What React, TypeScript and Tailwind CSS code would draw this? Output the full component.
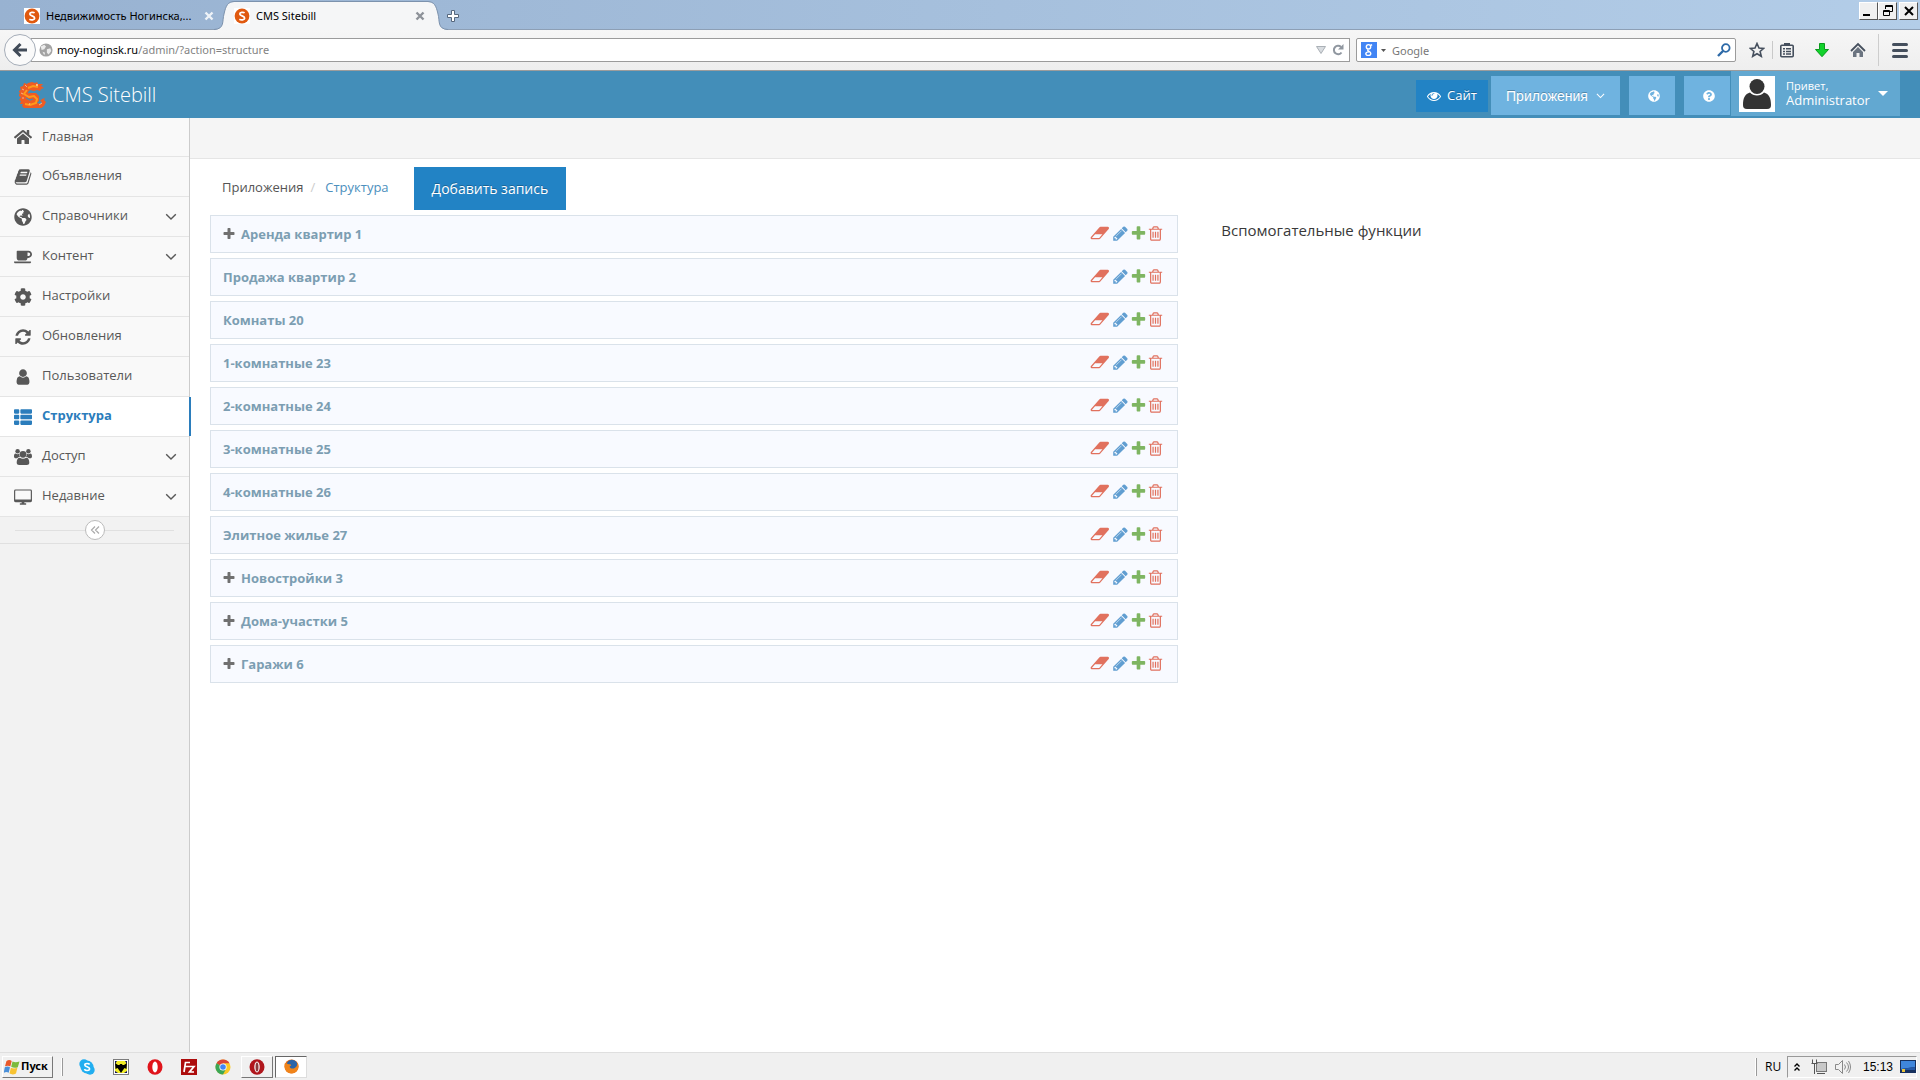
import React from "react";
import {
  FaHome,
  FaCoffee,
  FaCog,
  FaThList,
  FaGlobeAmericas,
  FaQuestionCircle,
} from "react-icons/fa";

type IconProps = { className?: string };

const glyphs = {
  user: "M1536 1399q0 109-62.5 187t-150.5 78h-854q-88 0-150.5-78t-62.5-187q0-85 8.5-160.5t31.5-152 58.5-131 94-89 134.5-34.5q131 128 313 128t313-128q76 0 134.5 34.5t94 89 58.5 131 31.5 152 8.5 160.5zm-256-887q0 159-112.5 271.5t-271.5 112.5-271.5-112.5-112.5-271.5 112.5-271.5 271.5-112.5 271.5 112.5 112.5 271.5z",
  book: "M1703 478q40 57 18 129l-275 906q-19 64-76.5 107.5t-122.5 43.5h-923q-77 0-148.5-53.5t-99.5-131.5q-24-67-2-127 0-4 3-27t4-37q1-8-3-21.5t-3-19.5q2-11 8-21t16.5-23.5 16.5-23.5q23-38 45-91.5t30-91.5q3-10 .5-30t-.5-28q3-11 17-28t17-23q21-36 42-92t25-90q1-9-2.5-32t.5-28q4-13 22-30.5t22-22.5q19-26 42.5-84.5t27.5-96.5q1-8-3-25.5t-2-26.5q2-8 9-18t18-23 17-21q8-12 16.5-30.5t15-35 16-36 19.5-32 26.5-23.5 36-11.5 47.5 5.5l-1 3q38-9 51-9h761q74 0 114 56t18 130l-274 906q-36 119-71.5 153.5t-128.5 34.5h-869q-27 0-38 15-11 16-1 43 24 70 144 70h923q29 0 56-15.5t35-41.5l300-987q7-22 5-57 38 15 59 43zm-1064 2q-4 13 2 22.5t20 9.5h608q13 0 25.5-9.5t16.5-22.5l21-64q4-13-2-22.5t-20-9.5h-608q-13 0-25.5 9.5t-16.5 22.5zm-83 256q-4 13 2 22.5t20 9.5h608q13 0 25.5-9.5t16.5-22.5l21-64q4-13-2-22.5t-20-9.5h-608q-13 0-25.5 9.5t-16.5 22.5z",
  plus: "M1600 736v192q0 40-28 68t-68 28h-416v416q0 40-28 68t-68 28h-192q-40 0-68-28t-28-68v-416h-416q-40 0-68-28t-28-68v-192q0-40 28-68t68-28h416v-416q0-40 28-68t68-28h192q40 0 68 28t28 68v416h416q40 0 68 28t28 68z",
  eraser: "M960 1408l336-384h-768l-336 384h768zm1013-1077q15 34 9.5 71.5t-30.5 65.5l-896 1024q-38 44-96 44h-768q-38 0-69.500-20.500t-47.500-54.500q-15-34-9.500-71.500t30.500-65.500l896-1024q38-44 96-44h768q38 0 69.500 20.500t47.500 54.500z",
  trash: "M704 736v576q0 14-9 23t-23 9h-64q-14 0-23-9t-9-23v-576q0-14 9-23t23-9h64q14 0 23 9t9 23zm256 0v576q0 14-9 23t-23 9h-64q-14 0-23-9t-9-23v-576q0-14 9-23t23-9h64q14 0 23 9t9 23zm256 0v576q0 14-9 23t-23 9h-64q-14 0-23-9t-9-23v-576q0-14 9-23t23-9h64q14 0 23 9t9 23zm128 724v-948h-896v948q0 22 7 40.500t14.500 27 10.500 8.500h832q3 0 10.500-8.500t14.500-27 7-40.500zm-672-1076h448l-48-117q-7-9-17-11h-317q-10 2-17 11zm928 32v64q0 14-9 23t-23 9h-96v948q0 83-47 143.500t-113 60.500h-832q-66 0-113-58.500t-47-141.500v-952h-96q-14 0-23-9t-9-23v-64q0-14 9-23t23-9h309l70-167q15-37 54-63t79-26h320q40 0 79 26t54 63l70 167h309q14 0 23 9t9 23z",
  pencil: "M491 1536l91-91-235-235-91 91v107h128v128h107zm523-928q0-22-22-22-10 0-17 7l-542 542q-7 7-7 17 0 22 22 22 10 0 17-7l542-542q7-7 7-17zm-54-192l416 416-832 832h-416v-416zm683 96q0 53-37 90l-166 166-416-416 166-165q36-38 90-38 53 0 91 38l235 234q37 39 37 91z",
  eye: "M1664 960q-152-236-381-353 61 104 61 225 0 185-131.500 316.500t-316.500 131.500-316.500-131.500-131.500-316.500q0-121 61-225-229 117-381 353 133 205 333.500 326.500t434.500 121.500 434.500-121.500 333.500-326.500zm-720-384q0-20-14-34t-34-14q-125 0-214.500 89.500t-89.500 214.500q0 20 14 34t34 14 34-14 14-34q0-86 61-147t147-61q20 0 34-14t14-34zm848 384q0 34-20 69-140 230-376.500 368.500t-499.500 138.500-499.500-139-376.500-368q-20-35-20-69t20-69q140-229 376.500-368t499.500-139 499.500 139 376.500 368q20 35 20 69z",
  refresh: "M1639 1056q0 5-1 7-64 268-268 434.500t-478 166.500q-146 0-282.500-55t-243.500-157l-129 129q-19 19-45 19t-45-19-19-45v-448q0-26 19-45t45-19h448q26 0 45 19t19 45-19 45l-137 137q71 66 161 102t187 36q134 0 250-65t186-179q11-17 53-117 8-23 30-23h192q13 0 22.500 9.500t9.500 22.500zm25-800v448q0 26-19 45t-45 19h-448q-26 0-45-19t-19-45 19-45l138-138q-148-137-349-137-134 0-250 65t-186 179q-11 17-53 117-8 23-30 23h-199q-13 0-22.500-9.500t-9.500-22.500v-7q65-268 270-434.500t480-166.500q146 0 284 55.500t245 156.500l130-129q19-19 45-19t45 19 19 45z",
};

function Glyph({ name, className, box = "0 0 1792 1792" }: { name: keyof typeof glyphs; className?: string; box?: string }) {
  return (
    <svg viewBox={box} className={className} fill="currentColor" aria-hidden="true">
      <path d={glyphs[name]} />
    </svg>
  );
}

const Book = (p: IconProps) => <Glyph name="book" {...p} />;
const User = (p: IconProps) => <Glyph name="user" {...p} />;
const Refresh = (p: IconProps) => <Glyph name="refresh" {...p} />;

function Users({ className }: IconProps) {
  return (
    <svg viewBox="0 0 20 18" className={className} fill="currentColor" aria-hidden="true">
      <circle cx="4" cy="2.700" r="2.500" />
      <circle cx="16" cy="2.700" r="2.500" />
      <circle cx="10" cy="6" r="3.800" />
      <path d="M0 8.500C0 6.500.6 5.200 1.800 5.200c1 .8 3 .9 4 .3 0 1.600.2 2.500.9 3.500-1.300 0-2.500.6-3.200 1.500H2C.8 10.500 0 9.800 0 8.500zM20 8.500c0-2-.6-3.300-1.800-3.300-1 .8-3 .9-4 .3 0 1.600-.2 2.500-.9 3.500 1.300 0 2.500.6 3.200 1.500H18c1.200 0 2-.7 2-2z" />
      <path d="M3 15.500c0-3.500 1-5.800 3.500-5.800 2 1.700 5 1.700 7 0 2.500 0 3.500 2.300 3.500 5.800 0 1.600-1.200 2.500-2.700 2.500H5.700C4.200 18 3 17.100 3 15.500z" />
    </svg>
  );
}

function Desktop({ className }: IconProps) {
  return (
    <svg viewBox="0 0 20 18" className={className} aria-hidden="true">
      <rect x=".7" y="1.200" width="18.600" height="13" rx="1" fill="none" stroke="currentColor" strokeWidth="1.300" />
      <path d="M1 11.800h18v2.400H1zM8.500 14h3v2h2v1.500h-7V16h2z" fill="currentColor" />
    </svg>
  );
}

function AngleDown({ className }: IconProps) {
  return (
    <svg viewBox="0 0 12 8" className={className} fill="none" stroke="currentColor" aria-hidden="true">
      <path d="M1.200 1.200L6 6l4.800-4.800" strokeWidth="1.400" />
    </svg>
  );
}

function AngleDoubleLeft({ className }: IconProps) {
  return (
    <svg viewBox="0 0 10 10" className={className} fill="none" stroke="currentColor" aria-hidden="true">
      <path d="M5 1.500L1.500 5 5 8.500M9 1.500L5.500 5 9 8.500" strokeWidth="1.200" />
    </svg>
  );
}

function SiteFavicon() {
  return (
    <svg viewBox="0 0 16 16" className="size-4 shrink-0" aria-hidden="true">
      <rect width="16" height="16" fill="#fff" />
      <circle cx="8" cy="8" r="7.400" fill="#e0590f" />
      <path d="M10.600 4.900C9.500 4 5.800 3.900 5.800 6.100c0 2.100 4.800 1.500 4.800 3.900 0 2.200-3.800 2.200-5.200 1.200" fill="none" stroke="#fff" strokeWidth="1.700" />
    </svg>
  );
}

function CloseMark({ className }: IconProps) {
  return (
    <svg viewBox="0 0 10 10" className={className} aria-hidden="true">
      <path d="M1.500 1.500l7 7M8.500 1.500l-7 7" stroke="currentColor" strokeWidth="2.400" />
    </svg>
  );
}

function GlobeMark() {
  return (
    <svg viewBox="0 0 16 16" className="size-[14px] shrink-0" aria-hidden="true">
      <circle cx="8" cy="8" r="7.500" fill="#a3a3a3" />
      <path d="M2 4l4-2 2 2-2 3-3 1zM9 7l4-1 1 3-3 4-2-2zM4 10l3 1-1 3z" fill="#ececec" />
    </svg>
  );
}

function TabStrip() {
  return (
    <div className="flex h-[30px] items-start bg-linear-to-r from-[#98b2d1] to-[#b3cde8] shadow-[inset_0_-1px_0_#8d9fb5]">
      <button className="ml-[24px] flex h-[30px] w-[190px] items-center gap-[6px] pt-[2px] text-black">
        <SiteFavicon />
        <span className="w-[152px] truncate text-left">Недвижимость Ногинска,...</span>
        <CloseMark className="ml-1 size-[10px] shrink-0 text-[#eef3f8]" />
      </button>
      <div className="flex h-[30px]">
        <svg viewBox="0 0 20 30" className="h-[30px] w-5" aria-hidden="true">
          <path d="M0 30C11 29 8 21 10 14C12 5 14 2 20 2V30z" fill="#f5f6f7" />
          <path d="M0 29.500C11 29 8 21 10 14C12 5 14 2 20 1.500" fill="none" stroke="#7c92ad" />
        </svg>
        <button className="mt-px flex w-[194px] items-center gap-[6px] border-t border-[#7c92ad] bg-[#f5f6f7] text-black">
          <SiteFavicon />
          <span className="grow text-left">CMS Sitebill</span>
          <CloseMark className="mr-[3px] size-[10px] text-[#8d9299]" />
        </button>
        <svg viewBox="0 0 20 30" className="h-[30px] w-5 -scale-x-100" aria-hidden="true">
          <path d="M0 30C11 29 8 21 10 14C12 5 14 2 20 2V30z" fill="#f5f6f7" />
          <path d="M0 29.500C11 29 8 21 10 14C12 5 14 2 20 1.500" fill="none" stroke="#7c92ad" />
        </svg>
      </div>
      <button aria-label="Новая вкладка" className="mt-[10px] -ml-px">
        <svg viewBox="0 0 12 12" className="size-3" aria-hidden="true">
          <path d="M4.500.5h3v4h4v3h-4v4h-3v-4h-4v-3h4z" fill="#fff" stroke="#55677d" />
        </svg>
      </button>
      <div className="mt-[2px] mr-[2px] ml-auto flex">
        <button aria-label="Свернуть" className="flex h-[18px] w-[19px] border border-[#555] border-t-white border-l-white bg-[#f0f0f0]">
          <span className="mt-[11px] ml-[3px] h-[2px] w-[7px] bg-black" />
        </button>
        <button aria-label="Восстановить" className="grid h-[18px] w-[19px] place-items-center border border-[#555] border-t-white border-l-white bg-[#f0f0f0]">
          <svg viewBox="0 0 12 12" className="size-3" fill="none" stroke="#000" aria-hidden="true">
            <path d="M3.500 4V.5h7v6H8M3 1.500h8M1.500 5.500h6v5h-6zM1 6.500h7" />
          </svg>
        </button>
        <button aria-label="Закрыть" className="ml-[2px] grid h-[18px] w-[19px] place-items-center border border-[#555] border-t-white border-l-white bg-[#f0f0f0]">
          <svg viewBox="0 0 10 10" className="size-[10px]" aria-hidden="true">
            <path d="M1 1l8 8M9 1L1 9" stroke="#000" strokeWidth="2" />
          </svg>
        </button>
      </div>
    </div>
  );
}

function AddressBar() {
  return (
    <div className="flex h-[41px] items-center border-b border-[#9c9c9c] bg-linear-to-b from-[#f6f6f6] to-[#eeeeee]">
      <button aria-label="Назад" className="z-10 ml-[4px] grid size-8 shrink-0 place-items-center rounded-full border border-[#a5adb8] bg-[#fafafa]">
        <svg viewBox="0 0 16 16" className="size-4" aria-hidden="true">
          <path d="M8.500 2L2.500 8l6 6M3 8h12" fill="none" stroke="#414b58" strokeWidth="3" />
        </svg>
      </button>
      <div className="-ml-[5px] flex h-6 grow items-center border border-[#9b9b9b] bg-white pl-[7px]">
        <GlobeMark />
        <div className="ml-1 grow whitespace-nowrap text-[#828282]">
          <span className="text-black">moy-noginsk.ru</span>/admin/?action=structure
        </div>
        <svg viewBox="0 0 10 8" className="mr-[6px] h-2 w-[10px]" aria-hidden="true">
          <path d="M.5.5h9L5 7.500z" fill="#d8dce0" stroke="#aab0b6" />
        </svg>
        <button aria-label="Обновить" className="mr-[5px]">
          <svg viewBox="0 0 12 12" className="size-3" aria-hidden="true">
            <path d="M9.500 8.500A4.200 4.200 0 1 1 9 3" fill="none" stroke="#9097a0" strokeWidth="2" />
            <path d="M11.500 0v5.500H6z" fill="#9097a0" />
          </svg>
        </button>
      </div>
      <div className="ml-[6px] flex h-6 w-[380px] items-center rounded-xs border border-[#9b9b9b] bg-white pl-1">
        <svg viewBox="0 0 16 16" className="size-4" aria-hidden="true">
          <rect width="16" height="16" fill="#4285f4" />
          <g fill="none" stroke="#fff" strokeWidth="1.400">
            <circle cx="7.500" cy="4.800" r="2.200" />
            <path d="M7 7.500c-1.500 1.500 2.800 2 2.800 4 0 2.500-5 2.500-5 .3 0-1.800 2-1.900 3.500-1.900M9.500 3.500l1.600-.8" />
          </g>
        </svg>
        <svg viewBox="0 0 5 3" className="mr-[6px] ml-1 h-[3px] w-[5px]" aria-hidden="true">
          <path d="M0 0h5L2.500 3z" fill="#555" />
        </svg>
        <input aria-label="Поиск" placeholder="Google" className="h-5 grow outline-none placeholder:text-[#777]" />
        <button aria-label="Найти" className="mr-[4px]">
          <svg viewBox="0 0 14 14" className="size-[14px]" fill="none" stroke="#2d6aa8" aria-hidden="true">
            <circle cx="8.800" cy="5" r="3.800" strokeWidth="1.800" />
            <path d="M6 8l-5 5" strokeWidth="2.400" />
          </svg>
        </button>
      </div>
      <div className="flex items-center text-[#454f5d]">
        <button aria-label="Закладка" className="ml-[13px]">
          <svg viewBox="0 0 16 16" className="size-4" aria-hidden="true">
            <path d="M8 1.500l2 4.500 4.700.4-3.600 3.100 1.200 4.800L8 11.700l-4.300 2.600 1.200-4.800L1.300 6.400 6 6z" fill="none" stroke="currentColor" strokeWidth="1.600" />
          </svg>
        </button>
        <span className="ml-[7px] h-[18px] w-px bg-[#c9c9c9]" />
        <button aria-label="Все закладки" className="ml-[6px]">
          <svg viewBox="0 0 16 16" className="size-4" aria-hidden="true">
            <rect x="1.800" y="3.300" width="12.400" height="11.400" rx="1" fill="none" stroke="currentColor" strokeWidth="1.600" />
            <path d="M5 1h6v3H5zM4 6h2v1.500H4zM7 6h5v1.500H7zM4 8.700h2v1.500H4zM7 8.700h5v1.500H7zM4 11.300h2v1.500H4zM7 11.300h5v1.500H7z" fill="currentColor" />
          </svg>
        </button>
        <button aria-label="Загрузки" className="ml-[19px]">
          <svg viewBox="0 0 16 16" className="size-4" aria-hidden="true">
            <path d="M5.500 1.500h5v6h4L8 14.700 1.500 7.500h4z" fill="#12d22c" stroke="#0a9a1c" />
          </svg>
        </button>
        <button aria-label="Домой" className="ml-5">
          <svg viewBox="0 0 16 16" className="size-4" aria-hidden="true">
            <path d="M1 9l7-7 7 7" fill="none" stroke="currentColor" strokeWidth="1.800" />
            <path d="M3 10l5-5 5 5v5H9.500v-4h-3v4H3z" fill="#6b7480" />
          </svg>
        </button>
        <span className="ml-3 h-8 w-px bg-[#cdcdcd]" />
        <button aria-label="Меню" className="mr-3 ml-[13px] flex flex-col gap-[3px]">
          <span className="h-[3px] w-4 rounded-xs bg-[#454f5d]" />
          <span className="h-[3px] w-4 rounded-xs bg-[#454f5d]" />
          <span className="h-[3px] w-4 rounded-xs bg-[#454f5d]" />
        </button>
      </div>
    </div>
  );
}

function DragonLogo() {
  return (
    <svg viewBox="0 0 27 27" className="size-[27px]" aria-hidden="true">
      <path
        d="M9 2l4-1 3 1 2-1 1 2 5 0-2 2 3 2-3 1-1 2-3-1-3 1-4-1-2 2 3 1 5 0 3 3 0 5-2 2 4 1 1-2-2-1 2-2 3-1-1 2 2 2-2 4-4 3-5-1-1 2-4-2-5 1-3-3 1-2-3 0 1-3-2-1 2-3-3-1 2-3-2-2 3-1-1-3 3-1 1-3 3 1z"
        fill="#ee5c24"
      />
      <path d="M9 7l5-2 5 1M8 9l-3 4 5 3 5-1 3 3-1 4-6 2-5-1" fill="none" stroke="#ff9a1a" strokeWidth="2" />
      <path d="M7 17l4 2 3-1M12 11l-3 1" fill="none" stroke="#438eb9" strokeWidth="1.200" />
      <path d="M3 8l2 1M2 12l2 1M3 17l2 0M6 4l2 2M20 24l3-2M10 24l1-2" stroke="#f9c89c" strokeWidth=".8" />
      <circle cx="18" cy="4" r=".9" fill="#ffe9b0" />
    </svg>
  );
}

function Header() {
  const light = "bg-[#6fb3e0] text-white [text-shadow:0_-1px_0_rgba(0,0,0,0.25)]";
  return (
    <header className="flex h-[47px] items-start bg-[#438eb9] text-white">
      <a href="#" className="ml-[19px] flex h-[47px] items-center gap-[6px] text-xl font-light">
        <DragonLogo />
        CMS Sitebill
      </a>
      <nav className="mr-5 ml-auto flex items-start">
        <a href="#" className="mt-[9px] flex h-8 w-[72px] items-center justify-center gap-[6px] bg-[#2283c5] text-[13px] [text-shadow:0_-1px_0_rgba(0,0,0,0.25)]">
          <Glyph name="eye" className="size-[14px]" />
          Сайт
        </a>
        <button className={"mt-[5px] ml-[3px] flex h-[39px] w-[129px] items-center justify-center gap-2 font-['Liberation_Sans'] text-sm " + light}>
          Приложения
          <AngleDown className="h-[6px] w-[9px]" />
        </button>
        <button aria-label="Язык" className={"mt-[5px] ml-[9px] grid h-[39px] w-[46px] place-items-center pl-1 " + light}>
          <FaGlobeAmericas className="size-3" />
        </button>
        <button aria-label="Помощь" className={"mt-[5px] ml-[9px] grid h-[39px] w-[46px] place-items-center pl-1 " + light}>
          <FaQuestionCircle className="size-3" />
        </button>
        <button className="ml-px flex h-[45px] w-[169px] items-center bg-[#62a8d1] pl-2 text-left">
          <span className="grid size-9 place-items-center bg-white">
            <svg viewBox="0 0 36 36" className="size-9" fill="#333" aria-hidden="true">
              <ellipse cx="18" cy="10.500" rx="7.500" ry="7.500" />
              <path d="M4 29c0-7 2-11 7-12.500 3 4 11 4 14 0 5 1.500 7 5.500 7 12.500 0 2.500-1 4-4 4H8c-3 0-4-1.500-4-4z" />
            </svg>
          </span>
          <span className="ml-[11px] w-[92px] pb-[2px] text-[13px] leading-[15px]">
            <span className="block text-[11px]">Привет,</span>
            Administrator
          </span>
          <svg viewBox="0 0 10 5" className="h-[5px] w-[10px]" aria-hidden="true">
            <path d="M0 0h10L5 5z" fill="#fff" />
          </svg>
        </button>
      </nav>
    </header>
  );
}

type MenuItem = { label: string; icon: React.ComponentType<IconProps>; open?: boolean; active?: boolean };

const menu: MenuItem[] = [
  { label: "Главная", icon: FaHome },
  { label: "Объявления", icon: Book },
  { label: "Справочники", icon: FaGlobeAmericas, open: true },
  { label: "Контент", icon: FaCoffee, open: true },
  { label: "Настройки", icon: FaCog },
  { label: "Обновления", icon: Refresh },
  { label: "Пользователи", icon: User },
  { label: "Структура", icon: FaThList, active: true },
  { label: "Доступ", icon: Users, open: true },
  { label: "Недавние", icon: Desktop, open: true },
];

function Sidebar() {
  return (
    <aside className="w-[190px] shrink-0 border-r border-[#cccccc] bg-[#f2f2f2]">
      <nav>
        {menu.map(({ label, icon: Icon, open, active }) => (
          <a
            key={label}
            href="#"
            className={
              "relative flex h-10 items-center border-b border-[#e5e5e5] text-[13px] first:h-[39px] " +
              (active ? "bg-white font-bold text-[#2b7dbc]" : "bg-[#f9f9f9] text-[#585858]")
            }
          >
            <span className="grid w-[42px] place-items-center pl-[3px]">
              <Icon className="size-[18px]" />
            </span>
            <span className="pb-px">{label}</span>
            {open && <AngleDown className="mr-3 ml-auto h-[8px] w-3" />}
            {active && <span className="absolute inset-y-0 -right-[2px] w-[2px] bg-[#2b7dbc]" />}
          </a>
        ))}
      </nav>
      <div className="flex h-[27px] items-center border-b border-[#e0e0e0] px-[15px]">
        <span className="h-px grow bg-[#e0e0e0]" />
        <button aria-label="Свернуть меню" className="grid size-5 place-items-center rounded-full border border-[#bbbbbb] bg-white text-[#aaaaaa]">
          <AngleDoubleLeft className="size-[10px]" />
        </button>
        <span className="h-px grow bg-[#e0e0e0]" />
      </div>
    </aside>
  );
}

const rows = [
  { label: "Аренда квартир 1", nested: true },
  { label: "Продажа квартир 2" },
  { label: "Комнаты 20" },
  { label: "1-комнатные 23" },
  { label: "2-комнатные 24" },
  { label: "3-комнатные 25" },
  { label: "4-комнатные 26" },
  { label: "Элитное жилье 27" },
  { label: "Новостройки 3", nested: true },
  { label: "Дома-участки 5", nested: true },
  { label: "Гаражи 6", nested: true },
];

function StructureList() {
  return (
    <ul className="flex w-[57.3%] flex-col gap-[5px]">
      {rows.map(({ label, nested }) => (
        <li key={label} className="flex h-[38px] items-center border border-[#dae2ea] bg-[#f8faff] pr-[13px] pl-3 text-[13px] font-bold text-[#7c9eb2]">
          {nested && (
            <button aria-label="Развернуть" className="mr-[5px] -ml-px text-[#707070]">
              <Glyph name="plus" className="size-[14px]" />
            </button>
          )}
          <span className="pt-px">{label}</span>
          <span className="ml-auto flex items-center pb-[2px]">
            <button aria-label="Очистить" className="mr-[3px] text-[#dd5a43] opacity-85">
              <Glyph name="eraser" box="0 128 1984 1536" className="h-4 w-[19px]" />
            </button>
            <button aria-label="Изменить" className="mr-px text-[#478fca] opacity-85">
              <Glyph name="pencil" className="size-[17px]" />
            </button>
            <button aria-label="Добавить" className="text-[#69aa46] opacity-85">
              <Glyph name="plus" className="size-[17px]" />
            </button>
            <button aria-label="Удалить" className="text-[#dd5a43] opacity-85">
              <Glyph name="trash" className="size-[17px]" />
            </button>
          </span>
        </li>
      ))}
    </ul>
  );
}

function Content() {
  return (
    <main className="grow bg-white">
      <div className="h-[41px] border-b border-[#e5e5e5] bg-[#f5f5f5]" />
      <div className="px-5 pt-2">
        <div className="flex h-[43px] items-center pl-3 text-[13px]">
          <nav className="flex items-center pb-[2px]">
            <span className="text-[#555555]">Приложения</span>
            <span className="mx-[7px] text-[#cccccc]">/</span>
            <a href="#" className="ml-[3px] text-[#4c8fbd]">Структура</a>
          </nav>
          <button className="ml-[25px] h-[43px] bg-[#2283c5] px-[18px] text-sm text-white [text-shadow:0_-1px_0_rgba(0,0,0,0.25)]">
            Добавить запись
          </button>
        </div>
        <div className="mt-[5px] flex">
          <StructureList />
          <p className="ml-[43px] pt-[5px] text-[15px] leading-5 text-[#393939]">Вспомогательные функции</p>
        </div>
      </div>
    </main>
  );
}

function OperaMark({ dark }: { dark?: boolean }) {
  return (
    <svg viewBox="0 0 16 16" className="size-4" aria-hidden="true">
      <ellipse cx="8" cy="8" rx="7.500" ry="7.700" fill={dark ? "#b0161c" : "#e0141b"} />
      <ellipse cx="8" cy="8" rx="2.700" ry="5.400" fill="#fff" />
      {dark && <ellipse cx="8" cy="8" rx="1.500" ry="4.500" fill="#8d3a3c" />}
    </svg>
  );
}

function Taskbar() {
  return (
    <footer className="flex h-7 items-center border-t border-[#dfdfdf] bg-[#f0f0f0] text-black">
      <button className="ml-[2px] flex h-[22px] w-[51px] items-center gap-px border border-[#777] border-t-white border-l-white pl-px font-['Noto_Sans'] text-[11px] font-bold">
        <svg viewBox="0 0 16 16" className="size-4 shrink-0" aria-hidden="true">
          <path d="M2.500 2c2-1.300 3.800-1 5.200-.1L6.300 7.500C5 6.500 3.200 6.300 1 7.300z" fill="#e8582a" />
          <path d="M8.500 2.500c2 1 4 1 7 0l-1.700 5.700C11.500 9.200 9.300 9 7.200 7.800z" fill="#7cba3d" />
          <path d="M.8 8.200c2-1.200 3.700-.9 5.200 0L4.700 13.800c-1.500-1-3.200-1-5 0z" fill="#4a8fd8" />
          <path d="M6.900 8.800c2 1 4 1.100 6.500 0L12 14.600c-2.500 1.200-4.500 1-6.500 0z" fill="#f8c332" />
        </svg>
        Пуск
      </button>
      <span className="ml-[8px] h-[18px] w-[2px] border-r border-[#999] bg-white" />
      <div className="ml-4 flex items-center gap-[18px]">
        <button aria-label="Skype">
          <svg viewBox="0 0 16 16" className="size-4" aria-hidden="true">
            <circle cx="5" cy="5" r="4.700" fill="#22aef0" />
            <circle cx="11" cy="11" r="4.700" fill="#22aef0" />
            <circle cx="8" cy="8" r="6.500" fill="#22aef0" />
            <path d="M10.600 5.500C9.800 4.200 5.800 4 5.800 6c0 2 4.800 1.400 4.800 3.800 0 2.200-4.300 2.200-5.200.3" fill="none" stroke="#fff" strokeWidth="1.600" />
          </svg>
        </button>
        <button aria-label="The Bat!">
          <svg viewBox="0 0 16 16" className="size-4" aria-hidden="true">
            <rect x=".5" y=".5" width="15" height="15" fill="#fff" stroke="#000" strokeDasharray="1 1" />
            <path d="M2 2h3v3H2zM11 2h3v3h-3zM2 11h3v3H2zM11 11h3v3h-3z" fill="#101060" />
            <path d="M4 2h8l2 3v7l-3 2H5l-3-2V5z" fill="#f1ec27" />
            <path d="M2 4l3 2 1.500 0L7 5h2l.5 1L11 6l3-2-.5 6-2-1-1.500 2L8 14l-2-3-1.500-2-2 1z" fill="#000" />
          </svg>
        </button>
        <button aria-label="Opera"><OperaMark /></button>
        <button aria-label="FileZilla">
          <svg viewBox="0 0 16 16" className="size-4" aria-hidden="true">
            <rect width="16" height="16" fill="#ad0c0c" />
            <path d="M3 13L4.500 3.500H9M4 7.500h4M8 7.500h5L8.500 13H13" fill="none" stroke="#fff" strokeWidth="1.700" />
          </svg>
        </button>
        <button aria-label="Chrome">
          <svg viewBox="0 0 16 16" className="size-4" aria-hidden="true">
            <circle cx="8" cy="8" r="7.500" fill="#fbc926" />
            <path d="M8 8L1.500 4.250A7.500 7.500 0 0 1 14.500 4.250H8z" fill="#db4437" />
            <path d="M8 8L1.500 4.250A7.500 7.500 0 0 0 8 15.500L11 10z" fill="#3ba757" />
            <circle cx="8" cy="8" r="3.600" fill="#fff" />
            <circle cx="8" cy="8" r="2.800" fill="#4285f4" />
          </svg>
        </button>
      </div>
      <button aria-label="Окно Opera" className="ml-[10px] grid h-[22px] w-8 place-items-center border border-[#777] border-t-white border-l-white">
        <OperaMark dark />
      </button>
      <button aria-label="Окно Firefox" className="ml-[2px] grid h-[22px] w-8 place-items-center border border-[#ddd] border-t-[#666] border-l-[#666] bg-white">
        <svg viewBox="0 0 16 16" className="size-[15px]" aria-hidden="true">
          <circle cx="8" cy="8" r="7.500" fill="#e66a12" />
          <circle cx="8.500" cy="6.500" r="5.800" fill="#2a64a8" />
          <path d="M1 4c1 1 2 .5 4 1.500 2 0 3 .5 2.500 1.500L6 8c0 2 3 3 5.500 1.500C14 8 14.500 6 14 3.500c2 3 2 7-.5 9.500-3 3-8 3-11 0C.5 11 .3 7 1 4z" fill="#f0841a" />
        </svg>
      </button>
      <div className="ml-auto flex items-center text-xs">
        <span className="h-[18px] w-[2px] border-r border-[#999] bg-white" />
        <span className="ml-2 w-[22px]">RU</span>
        <div className="mr-[3px] flex h-[22px] items-center border border-white border-t-[#999] border-l-[#999] pl-[5px]">
          <svg viewBox="0 0 8 10" className="h-[10px] w-2" fill="none" stroke="#000" strokeWidth="1.400" aria-hidden="true">
            <path d="M1.500 4.500L4 2l2.500 2.500M1.500 8.500L4 6l2.500 2.500" />
          </svg>
          <svg viewBox="0 0 16 16" className="ml-[10px] size-4" fill="none" stroke="#777" aria-hidden="true">
            <rect x="5.500" y="3.500" width="10" height="9" fill="#c8c8c8" />
            <path d="M6 14.500h8M1.500.5v4h4v-4M3.500 4.500v10.500M.5 4.500h6" stroke="#555" />
          </svg>
          <svg viewBox="0 0 16 16" className="ml-2 size-4" fill="none" stroke="#888" aria-hidden="true">
            <path d="M.5 5.500h3l4-4v13l-4-4h-3zM9.500 5.500q2 2.500 0 5M11.500 3.500q4 4.500 0 9M13.500 2q4 6 0 12" />
          </svg>
          <span className="ml-3 font-['Liberation_Sans']">15:13</span>
          <svg viewBox="0 0 16 13" className="ml-[7px] h-[13px] w-4" aria-hidden="true">
            <rect width="16" height="13" fill="#16305e" />
            <path d="M1 1h14v6L1 9z" fill="#3f86dc" />
            <path d="M1 9l14-2v3H1z" fill="#2459a8" />
            <path d="M2 9h3v3H2z" fill="#e8c33c" />
          </svg>
        </div>
      </div>
    </footer>
  );
}

export default function App() {
  return (
    <div className="flex min-h-screen flex-col font-['Open_Sans',sans-serif]">
      <div className="font-['Noto_Sans',sans-serif] text-[11px]">
        <TabStrip />
        <AddressBar />
      </div>
      <Header />
      <div className="flex grow">
        <Sidebar />
        <Content />
      </div>
      <Taskbar />
    </div>
  );
}
